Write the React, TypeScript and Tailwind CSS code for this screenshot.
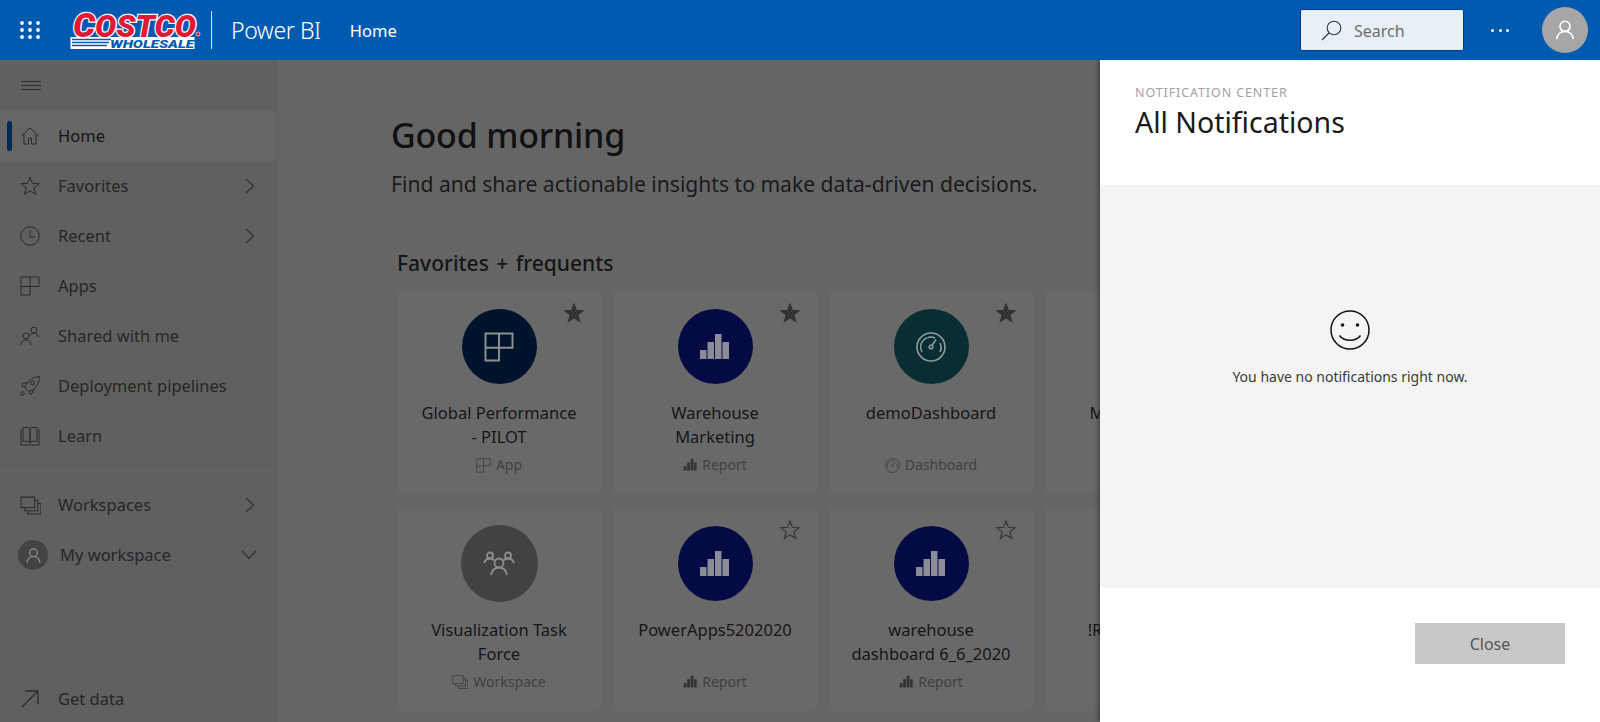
import React from "react";

const font = "font-['Noto_Sans','Open_Sans',sans-serif]";

const S = ({ size = 20, children, className = "" }: { size?: number; children: React.ReactNode; className?: string }) => (
  <svg width={size} height={size} viewBox="0 0 20 20" fill="none" stroke="currentColor" strokeWidth={1} className={"shrink-0 " + className}>
    {children}
  </svg>
);

const AppsI = ({ size = 20, className = "", sw = 1 }: { size?: number; className?: string; sw?: number }) => (
  <S size={size} className={className}>
    <path strokeWidth={sw} d="M1 1h18v9.5H10V19H1V1zM1 10.500h9M10 1v9.500" />
  </S>
);
const BarsI = ({ className = "", size = 20 }: { className?: string; size?: number }) => (
  <svg width={size} height={size} viewBox="0 0 20 20" fill="currentColor" className={"shrink-0 " + className}>
    <path d="M1 11.500h4V18H1zM6 6h4v12H6zM11 1h4v17h-4zM16 6.500h3.500V18H16z" />
  </svg>
);
const BigBars = () => (
  <svg width={30} height={26} viewBox="0 0 30 26" fill="#8c8c98" className="shrink-0">
    <path d="M0 16h6.500v9H0zM7.500 8h6.500v17H7.500zM15 0h6.500v25H15zM22.500 8H29v17h-6.500z" />
  </svg>
);
const GaugeI = ({ size = 30, stroke = "#8f9a9a" }: { size?: number; stroke?: string }) => (
  <svg width={size} height={size} viewBox="0 0 30 30" fill="none" stroke={stroke} strokeWidth={1.6} className="shrink-0">
    <circle cx="15" cy="15" r="14" />
    <path d="M6 20a10 10 0 0 1 13-14M24 11a10 10 0 0 1 0 9" />
    <circle cx="15" cy="15" r="1.800" />
    <path d="M16 13.500l4-6" />
  </svg>
);
const WorkspaceI = ({ size = 20, className = "" }: { size?: number; className?: string }) => (
  <S size={size} className={className}>
    <path d="M1 2h13v10H1zM4.500 12v3H17V5h-3M7.500 15v3H20V8h-3" />
  </S>
);
const GroupI = () => (
  <svg width={32} height={26} viewBox="0 0 32 26" fill="none" stroke="#8e8e8e" strokeWidth={1.8} className="shrink-0">
    <circle cx="16" cy="12" r="4.500" />
    <circle cx="7" cy="4.500" r="3" />
    <circle cx="25" cy="4.500" r="3" />
    <path d="M8 24c1-5 4-7.500 8-7.500s7 2.500 8 7.500M1 12c.8-2.500 3-4.500 6-4.500 2 0 3.500.7 4.500 2M31 12c-.8-2.500-3-4.500-6-4.500-2 0-3.500.7-4.500 2" />
  </svg>
);
const Star = ({ filled }: { filled: boolean }) => (
  <svg width={20} height={20} viewBox="0 0 20 20" fill={filled ? "#333333" : "none"} stroke="#333333" strokeWidth={1.1} className="absolute right-[17px] top-[13px]">
    <path d="M10 1l2.400 6.300 6.800.4-5.300 4.200 1.800 6.600L10 14.800l-5.700 3.700 1.800-6.600L.8 7.700l6.800-.4z" />
  </svg>
);
const Chevron = ({ className = "" }: { className?: string }) => (
  <svg width={10} height={16} viewBox="0 0 10 16" fill="none" stroke="#2e2e2e" strokeWidth={1.1} className={"shrink-0 " + className}>
    <path d="M1 1l7.500 7L1 15" />
  </svg>
);
const PersonI = ({ size = 24, color = "#fff" }: { size?: number; color?: string }) => (
  <svg width={size} height={size} viewBox="0 0 24 24" fill="none" stroke={color} strokeWidth={1.8}>
    <circle cx="12" cy="8" r="5.500" />
    <path d="M3 22c.5-5 4-8.500 9-8.500s8.500 3.500 9 8.500" />
  </svg>
);

const Logo = () => (
  <svg width={132} height={38} viewBox="0 0 132 38" className="shrink-0">
    <rect x="0.500" y="26" width="124" height="12" fill="#fff" />
    <path d="M2 28.500h39M2 31.500h37M2 34.500h35" stroke="#005bb0" strokeWidth="1.500" />
    <text x="3" y="25.500" fill="#e31837" stroke="#fff" strokeWidth="2.500" paintOrder="stroke" textLength="123" lengthAdjust="spacingAndGlyphs" fontSize="31" fontFamily="Roboto, sans-serif" fontWeight="900" fontStyle="italic">
      <tspan fontSize="34">C</tspan>OSTCO
    </text>
    <text x="40" y="36.500" fill="#005bb0" fontFamily="Roboto, sans-serif" fontWeight="900" fontStyle="italic" fontSize="11" textLength="84" lengthAdjust="spacingAndGlyphs">WHOLESALE</text>
    <circle cx="128" cy="23" r="2" fill="#e31837" stroke="#fff" strokeWidth="0.600" />
  </svg>
);

const Header = () => (
  <header className="relative z-20 flex h-[60px] items-center bg-[#005bb0] text-white">
    <svg width={20} height={18} viewBox="0 0 20 18" fill="#fff" className="ml-[20px] shrink-0">
      {[2, 10, 18].map((x) => [2, 9, 16].map((y) => <circle key={`${x}${y}`} cx={x} cy={y} r={1.900} />))}
    </svg>
    <div className="ml-[30px]"><Logo /></div>
    <div className="ml-[9px] h-[38px] w-px bg-[#d5e3f2]" />
    <span className="ml-[19px] pt-[1px] text-[23px] font-light leading-none tracking-[-0.4px]">Power BI</span>
    <span className="ml-[29px] pt-[2px] text-[16.500px] leading-none">Home</span>
    <div className="ml-auto flex h-[42px] w-[164px] items-center rounded-[2px] border border-[#003a8c] bg-[#e8eff7] pl-[20px]">
      <svg width={21} height={21} viewBox="0 0 21 21" fill="none" stroke="#333" strokeWidth={1.1}>
        <circle cx="13" cy="8" r="6.800" />
        <path d="M8 13L1 20" />
      </svg>
      <span className="ml-[12px] pt-[1px] text-[16px] text-[#6d6d6d]">Search</span>
    </div>
    <div className="ml-[27px] flex w-[18px] justify-between">
      <i className="h-[3px] w-[3px] rounded-full bg-white" />
      <i className="h-[3px] w-[3px] rounded-full bg-white" />
      <i className="h-[3px] w-[3px] rounded-full bg-white" />
    </div>
    <div className="ml-[33px] mr-[12px] flex h-[46px] w-[46px] items-center justify-center rounded-full bg-[#a6a6a6]">
      <PersonI size={22} />
    </div>
  </header>
);

const NavRow = ({ icon, label, chevron, active }: { icon: React.ReactNode; label: string; chevron?: boolean; active?: boolean }) => (
  <div className={"relative flex h-[50px] items-center pl-[20px] pr-[21px] " + (active ? "bg-[#666666]" : "")}>
    {active && <i className="absolute left-[7px] top-[10px] h-[30px] w-[5px] rounded-full bg-[#002a55]" />}
    <span className="flex w-[38px] text-[#2a2a2a]">{icon}</span>
    <span className={"text-[16.500px] " + (active ? "text-[#141414]" : "text-[#262626]")}>{label}</span>
    {chevron && <Chevron className="ml-auto" />}
  </div>
);

const Sidebar = () => (
  <aside className="flex h-[662px] w-[277px] shrink-0 flex-col border-r border-[#5c5c5c] bg-[#606060]">
    <div className="flex h-[51px] items-center pl-[21px]">
      <svg width={20} height={9} viewBox="0 0 20 9" stroke="#2e2e2e" strokeWidth={1}>
        <path d="M0 .5h20M0 4.500h20M0 8.500h20" />
      </svg>
    </div>
    <NavRow active label="Home" icon={<S><path d="M1.500 10L10 2l8.500 8M4 8v10h4.500v-6h3v6H16V8" /></S>} />
    <NavRow chevron label="Favorites" icon={<S><path d="M10 1l2.400 6.300 6.800.4-5.300 4.200 1.800 6.600L10 14.800l-5.700 3.700 1.800-6.600L.8 7.700l6.800-.4z" /></S>} />
    <NavRow chevron label="Recent" icon={<S><circle cx="10" cy="10" r="9.300" /><path d="M10 4.500V11h5" /></S>} />
    <NavRow label="Apps" icon={<AppsI />} />
    <NavRow label="Shared with me" icon={<S><circle cx="6" cy="10" r="3" /><circle cx="14" cy="4" r="3" /><path d="M1 19c.3-3.500 2-5 5-5s4.700 1.500 5 5M9.500 10c.7-2 2-3 4.500-3s4.300 1.500 5 4" /></S>} />
    <NavRow label="Deployment pipelines" icon={<S><path d="M19.500.5C14 1 10 3 7 7l-2 5 3.500 3.500 5-2c3.500-3 5.700-7.500 6-13zM7 7H3.500L1.500 10l3.500 1M13 13v3.500L10 18.500l-1-3.500" /><circle cx="12.500" cy="7" r="2" /><circle cx="2.500" cy="17.500" r="1.800" /></S>} />
    <NavRow label="Learn" icon={<S><path d="M1 3v16h18V3M3 1.500h5c1 0 2 .7 2 2V17c0-1-1-1.700-2-1.700H3zM17 1.500h-5c-1 0-2 .7-2 2V17c0-1 1-1.700 2-1.700h5z" /></S>} />
    <div className="my-[9px] h-px w-[275px] bg-[#676767]" />
    <NavRow chevron label="Workspaces" icon={<WorkspaceI size={21} />} />
    <div className="relative flex h-[50px] items-center pl-[18px] pr-[19px]">
      <div className="flex h-[30px] w-[30px] items-center justify-center rounded-full bg-[#434343]">
        <PersonI size={17} color="#8e8e8e" />
      </div>
      <span className="ml-[12px] text-[16.500px] text-[#262626]">My workspace</span>
      <svg width={16} height={10} viewBox="0 0 16 10" fill="none" stroke="#2e2e2e" strokeWidth={1.1} className="ml-auto">
        <path d="M1 1l7 7.500L15 1" />
      </svg>
    </div>
    <div className="mt-auto mb-[-2px]">
      <NavRow label="Get data" icon={<S><path d="M2 18L18 2M5 2h13v13" strokeWidth={1.300} /></S>} />
    </div>
  </aside>
);

type CardProps = { title: string; kind: string; circle?: string; icon?: React.ReactNode; kindIcon?: React.ReactNode; star?: "on" | "off"; big?: boolean };

const Card = ({ title, kind, circle, icon, kindIcon, star, big }: CardProps) => (
  <div className="relative flex h-[204px] flex-col items-center rounded-[4px] bg-[#696969] px-[21px] pt-[19px]">
    {star && <Star filled={star === "on"} />}
    <div className={"flex shrink-0 items-center justify-center rounded-full " + (big ? "-mt-[1px] mb-[-1px] -mx-[1px] h-[77px] w-[77px]" : "h-[75px] w-[75px]") + " " + (circle ?? "")}>
      {icon}
    </div>
    <div className="mt-[17px] h-[48px] w-full text-center text-[16.500px] leading-[24px] text-[#161616]">{title}</div>
    <div className="mt-[6px] flex items-center gap-[5px] text-[14px] leading-[20px] text-[#414141]">
      {kindIcon}
      <span>{kind}</span>
    </div>
  </div>
);

const barsKind = <BarsI size={14} className="text-[#333]" />;
const navy = "bg-[#040b44]";

const Main = () => (
  <main className="h-[662px] min-w-0 flex-1 overflow-hidden bg-[#656565] pl-[114px]">
    <h1 className="mt-[49px] text-[34px] font-medium leading-[52px] tracking-[-0.2px] text-[#111111]">Good morning</h1>
    <p className="mt-[8px] whitespace-nowrap text-[21.100px] leading-[30px] text-[#1a1a1a]">Find and share actionable insights to make data-driven decisions.</p>
    <h2 className="ml-[6px] mt-[49px] text-[21px] font-medium leading-[30px] text-[#151515] [word-spacing:2px]">Favorites + frequents</h2>
    <div className="ml-[6px] mt-[12px] grid w-[880px] grid-cols-[204px_204px_204px_204px] gap-x-[12px] gap-y-[13px]">
      <Card title="Global Performance - PILOT" kind="App" star="on" circle="bg-[#00132d]" icon={<AppsI size={30} sw={1.3} className="text-[#8f8f8f]" />} kindIcon={<AppsI size={15} className="text-[#3e3e3e]" />} />
      <Card title="Warehouse Marketing" kind="Report" star="on" circle={navy} icon={<BigBars />} kindIcon={barsKind} />
      <Card title="demoDashboard" kind="Dashboard" star="on" circle="bg-[#082e33]" icon={<GaugeI />} kindIcon={<GaugeI size={15} stroke="#3e3e3e" />} />
      <Card title="Merchandising Report" kind="Report" />
      <Card big title="Visualization Task Force" kind="Workspace" circle="bg-[#424242]" icon={<GroupI />} kindIcon={<WorkspaceI size={16} className="text-[#3e3e3e]" />} />
      <Card title="PowerApps5202020" kind="Report" star="off" circle={navy} icon={<BigBars />} kindIcon={barsKind} />
      <Card title="warehouse dashboard 6_6_2020" kind="Report" star="off" circle={navy} icon={<BigBars />} kindIcon={barsKind} />
      <Card title="!Report Sample" kind="Report" />
    </div>
  </main>
);

const Panel = () => (
  <section className="absolute bottom-0 right-0 top-[60px] z-10 flex w-[500px] flex-col bg-white shadow-[-2px_0_4px_rgba(0,0,0,0.35)]">
    <div className="h-[125px] pl-[35px] pt-[25px]">
      <div className="text-[12.500px] leading-[16px] tracking-[0.9px] text-[#a3a3a3]">NOTIFICATION CENTER</div>
      <div className="mt-[2px] text-[28.500px] leading-[38px] text-[#1a1a1a]">All Notifications</div>
    </div>
    <div className="flex h-[403px] flex-col items-center bg-[#f4f4f4] pt-[125px]">
      <svg width={40} height={40} viewBox="0 0 40 40" fill="none" stroke="#111" strokeWidth={1.500}>
        <circle cx="20" cy="20" r="19" />
        <circle cx="12.500" cy="15" r="1.800" fill="#111" stroke="none" />
        <circle cx="27.500" cy="15" r="1.800" fill="#111" stroke="none" />
        <path d="M9.500 25.500c2.500 3.500 6 4.800 10.500 4.800s8-1.300 10.500-4.800" />
      </svg>
      <p className="mt-[16px] text-[14px] leading-[22px] text-[#3a3a3a]">You have no notifications right now.</p>
    </div>
    <div className="flex flex-1 justify-end pr-[35px] pt-[35px]">
      <div className="flex h-[41px] w-[150px] items-center justify-center bg-[#c8c8c8] text-[16px] text-[#555555]">Close</div>
    </div>
  </section>
);

export default function App() {
  return (
    <div className={"relative h-[722px] w-[1600px] overflow-hidden bg-[#656565] " + font}>
      <Header />
      <div className="flex">
        <Sidebar />
        <Main />
      </div>
      <Panel />
    </div>
  );
}
